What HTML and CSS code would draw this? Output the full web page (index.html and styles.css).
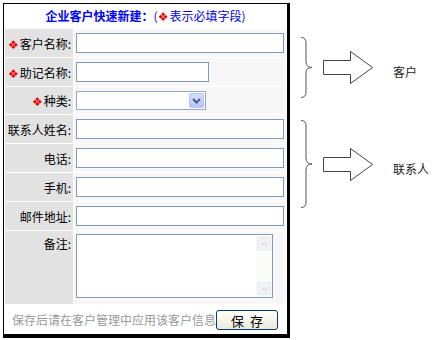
FILE: index.html
```html
<!DOCTYPE html>
<html lang="zh-CN">
<head>
    <meta charset="UTF-8">
    <meta name="viewport" content="width=device-width, initial-scale=1.0">
    <title>企业客户快速新建</title>
    <link rel="stylesheet" href="styles.css">
</head>
<body>
    <div class="page">
        <!-- 快速新建表单 -->
        <div class="panel">
            <div class="title"><b>企业客户快速新建：</b>(<span class="req">❖</span>表示必填字段)</div>
            <table class="form">
                <tr>
                    <th><span class="req">❖</span>客户名称:</th>
                    <td><input class="long" type="text"></td>
                </tr>
                <tr>
                    <th><span class="req">❖</span>助记名称:</th>
                    <td><input class="short" type="text"></td>
                </tr>
                <tr class="low">
                    <th><span class="req">❖</span>种类:</th>
                    <td>
                        <div class="select">
                            <select></select>
                            <span class="drop">
                                <svg width="9" height="6" viewBox="0 0 9 6"><path d="M1 1 L4.5 4.5 L8 1" fill="none" stroke="#4a5d86" stroke-width="2"/></svg>
                            </span>
                        </div>
                    </td>
                </tr>
                <tr>
                    <th>联系人姓名:</th>
                    <td><input class="long" type="text"></td>
                </tr>
                <tr>
                    <th>电话:</th>
                    <td><input class="long" type="text"></td>
                </tr>
                <tr>
                    <th>手机:</th>
                    <td><input class="long" type="text"></td>
                </tr>
                <tr>
                    <th>邮件地址:</th>
                    <td><input class="long" type="text"></td>
                </tr>
                <tr class="memo-row">
                    <th>备注:</th>
                    <td>
                        <div class="memo">
                            <textarea></textarea>
                            <div class="scroll">
                                <span class="arrow-btn"><svg width="7" height="4" viewBox="0 0 7 4"><path d="M0.5 3.5 L3.5 0.5 L6.5 3.5" fill="none" stroke="#c3c9d4"/></svg></span>
                                <span class="arrow-btn"><svg width="7" height="4" viewBox="0 0 7 4"><path d="M0.5 0.5 L3.5 3.5 L6.5 0.5" fill="none" stroke="#c3c9d4"/></svg></span>
                            </div>
                        </div>
                    </td>
                </tr>
            </table>
            <div class="foot">
                <span>保存后请在客户管理中应用该客户信息</span>
                <button type="button">保&nbsp;&nbsp;存</button>
            </div>
        </div>

        <!-- 说明 -->
        <div class="notes">
            <div class="note note-top">
                <svg class="brace" width="13" height="61" viewBox="0 0 13 61"><path d="M1 0.5 Q6 0.5 6 6 L6 25 Q6 30.5 12 30.5 Q6 30.5 6 36 L6 55 Q6 60.5 1 60.5" fill="none" stroke="#555"/></svg>
                <svg class="block-arrow" width="51" height="33" viewBox="0 0 51 33"><polygon points="0.5,9.5 27.5,9.5 27.5,0.5 49.5,16.5 27.5,32.5 27.5,23.5 0.5,23.5" fill="#fff" stroke="#444"/></svg>
                <span class="note-text">客户</span>
            </div>
            <div class="note note-bottom">
                <svg class="brace" width="13" height="88" viewBox="0 0 13 88"><path d="M1 0.5 Q6 0.5 6 6 L6 38 Q6 44 12 44 Q6 44 6 50 L6 82 Q6 87.5 1 87.5" fill="none" stroke="#555"/></svg>
                <svg class="block-arrow" width="51" height="33" viewBox="0 0 51 33"><polygon points="0.5,9.5 27.5,9.5 27.5,0.5 49.5,16.5 27.5,32.5 27.5,23.5 0.5,23.5" fill="#fff" stroke="#444"/></svg>
                <span class="note-text">联系人</span>
            </div>
        </div>
    </div>
</body>
</html>
```

FILE: styles.css
```css
body {
    margin: 0;
    background-color: #fff;
    font-family: "Noto Sans CJK SC", "DejaVu Sans", sans-serif;
    font-size: 12px;
    color: #000;
}

.page {
    display: flex;
    align-items: flex-start;
    padding: 3px 0 0 3px;
}

.panel {
    width: 287px;
    box-sizing: border-box;
    border: 1px solid #000;
    border-right-width: 3px;
    border-bottom-width: 4px;
    background-color: #fff;
}

.title {
    height: 24px;
    line-height: 24px;
    text-align: center;
    color: #0000ee;
}

.title b {
    color: #0000ff;
}

.req {
    color: #ee0000;
    font-family: "DejaVu Sans", sans-serif;
    font-size: 12px;
    margin-right: 1px;
}

.form {
    width: 100%;
    border-collapse: separate;
    border-spacing: 1px;
}

.form th {
    width: 66px;
    height: 28px;
    padding: 0 2px 0 0;
    background-color: #e2e2e2;
    font-weight: normal;
    text-align: right;
    white-space: nowrap;
}

.form td {
    height: 28px;
    padding: 0 0 0 2px;
    background-color: #f7f7f7;
}

.form .low th,
.form .low td {
    height: 27px;
}

.form input {
    display: block;
    box-sizing: border-box;
    height: 20px;
    border: 1px solid #7f9db9;
    padding: 0 2px;
    background-color: #fff;
    font: inherit;
}

.form .long {
    width: 208px;
}

.form .short {
    width: 133px;
}

.select {
    position: relative;
    width: 130px;
    height: 19px;
    box-sizing: border-box;
    border: 1px solid #93a9cc;
    background-color: #fff;
}

.select select {
    appearance: none;
    width: 100%;
    height: 100%;
    border: 0;
    background: transparent;
}

/* 下拉按钮 */
.drop {
    position: absolute;
    top: 1px;
    right: 1px;
    width: 15px;
    height: 15px;
    box-sizing: border-box;
    border: 1px solid #b6c6ee;
    border-radius: 2px;
    background: linear-gradient(#d2defc, #b3c6f4);
    display: flex;
    justify-content: center;
    align-items: center;
}

.memo-row th,
.memo-row td {
    height: 69px;
    vertical-align: top;
}

.memo-row th {
    padding-top: 4px;
}

.memo-row td {
    padding-top: 3px;
}

.memo {
    display: flex;
    width: 197px;
    height: 64px;
    box-sizing: border-box;
    border: 1px solid #7f9db9;
    background-color: #fff;
}

.memo textarea {
    flex: 1;
    border: 0;
    resize: none;
    outline: none;
}

.scroll {
    width: 16px;
    padding: 2px 0;
    display: flex;
    flex-direction: column;
    justify-content: space-between;
    align-items: center;
    background-color: #fbfbf8;
}

.arrow-btn {
    width: 14px;
    height: 13px;
    box-sizing: border-box;
    border: 1px solid #e4e7ec;
    border-radius: 2px;
    background-color: #f0f2f5;
    display: flex;
    justify-content: center;
    align-items: center;
}

.foot {
    height: 29px;
    padding-left: 8px;
    display: flex;
    align-items: center;
    color: #999;
}

.foot button {
    width: 62px;
    height: 20px;
    padding: 0;
    border: 1px solid #003c74;
    border-radius: 3px;
    background: linear-gradient(#ffffff, #ece9d8);
    font-family: inherit;
    font-size: 13px;
    color: #000;
}

.notes {
    margin-left: 10px;
}

.note {
    display: flex;
    align-items: center;
}

.note-top {
    margin-top: 34px;
    height: 61px;
}

.note-bottom {
    margin-top: 22px;
    height: 88px;
}

.block-arrow {
    margin-left: 10px;
}

.note-text {
    margin: 8px 0 0 19px;
    color: #222;
}
```
